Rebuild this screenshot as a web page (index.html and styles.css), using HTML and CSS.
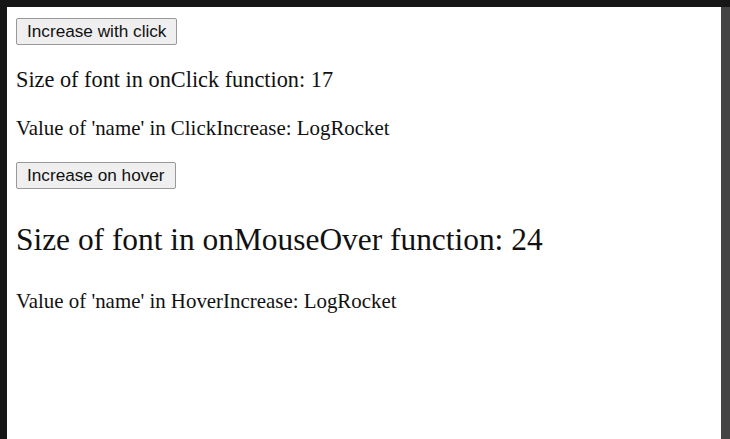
FILE: index.html
```html
<!DOCTYPE html>
<html>
<head>
<meta charset="utf-8">
<link rel="stylesheet" href="styles.css">
</head>
<body>
<div class="frame">
  <div class="page">
    <button class="btn">Increase with click</button>
    <p class="txt t17">Size of font in onClick function: 17</p>
    <p class="txt">Value of 'name' in ClickIncrease: LogRocket</p>
    <button class="btn">Increase on hover</button>
    <p class="txt t24">Size of font in onMouseOver function: 24</p>
    <p class="txt">Value of 'name' in HoverIncrease: LogRocket</p>
  </div>
  <div class="rail"></div>
</div>
</body>
</html>
```
FILE: styles.css
```css
html, body {
  margin: 0;
  padding: 0;
  height: 100%;
  overflow: hidden;
}
body {
  background: #161616;
}
.frame {
  display: flex;
  height: 100%;
  padding: 7px 0 0 7px;
  box-sizing: border-box;
}
.page {
  flex: 1;
  background: #fff;
  padding: 11px 9px;
  font-family: "Liberation Serif", "Times New Roman", serif;
  color: #111;
  display: flow-root;
}
.rail {
  width: 9px;
  background: #444;
}
.btn {
  display: block;
  font-family: "Liberation Sans", Arial, sans-serif;
  font-size: 17.2px;
  color: #111;
  background: #efefef;
  border: 1px solid #999;
  border-radius: 2px;
  padding: 2px 10px;
  line-height: 21px;
  margin: 0;
}
.txt {
  font-size: 20.9px;
  margin: 21px 0;
}
.t17 {
  font-size: 22.3px;
  margin: 22.3px 0;
}
.t24 {
  font-size: 31.4px;
  margin: 33.4px 0 31.4px;
}
```
